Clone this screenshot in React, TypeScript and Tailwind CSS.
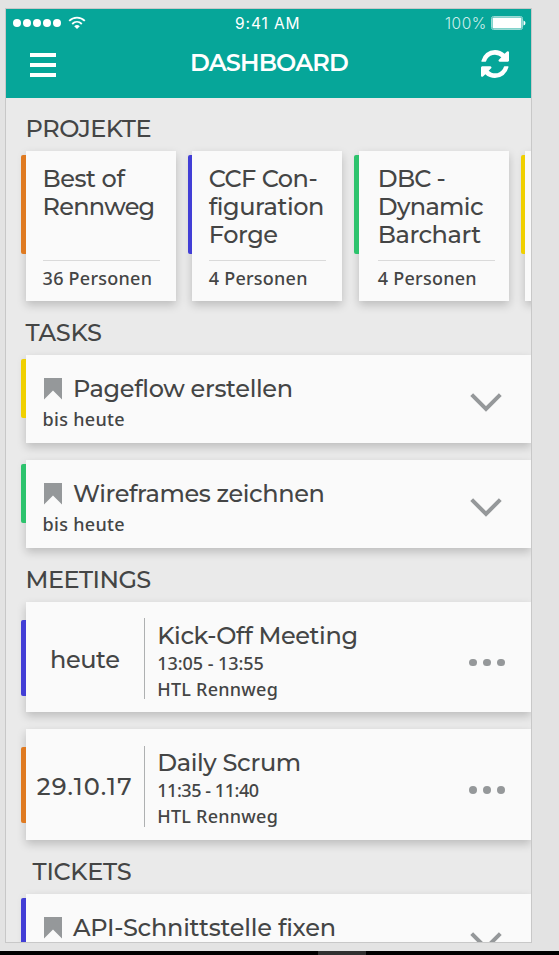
import type { ReactNode } from "react";

const display = "font-['Montserrat','Inter',sans-serif] text-[24px] leading-7 whitespace-nowrap";
const meta = "font-['Noto_Sans',sans-serif] font-medium text-[18px] leading-[26px] whitespace-nowrap";
const cardShadow = "bg-[#fafafa] shadow-[0_4px_9px_rgba(0,0,0,0.2)]";

function Heading({ children, className }: { children: ReactNode; className: string }) {
  return (
    <h2 className={`${display} h-[54px] shrink-0 pt-[18px] font-medium ${className}`}>{children}</h2>
  );
}

function Stripe({ className }: { className: string }) {
  return <div className={`relative z-10 w-[4.5px] shrink-0 rounded-l-[2px] ${className}`} />;
}

function Bookmark() {
  return (
    <svg width="18" height="22" viewBox="0 0 18 22" className="mt-[3px] shrink-0" fill="#95989a">
      <path d="M0 0h18v21.5l-9-9-9 9z" />
    </svg>
  );
}

function Chevron() {
  return (
    <svg width="32" height="20" viewBox="0 0 32 20" fill="none" stroke="#95989a" strokeWidth="4">
      <path d="M1.7 1.7L16 15.9L30.3 1.7" />
    </svg>
  );
}

function Dots() {
  return (
    <div className="flex gap-[6.5px]">
      <i className="size-[7.5px] rounded-full bg-[#95989a]" />
      <i className="size-[7.5px] rounded-full bg-[#95989a]" />
      <i className="size-[7.5px] rounded-full bg-[#95989a]" />
    </div>
  );
}

type Line = { text: string; spacing: string };

function Project({ stripe, lines, people, inset }: {
  stripe: string; lines: Line[]; people: string; inset: string;
}) {
  return (
    <div className="flex w-[154.5px] shrink-0">
      <Stripe className={`mt-1 h-[99.5px] ${stripe}`} />
      <div className={`flex h-[150px] w-[150px] flex-col pt-[14px] ${inset} ${cardShadow}`}>
        <div className="h-[95px]">
          {lines.map((l) => (
            <p key={l.text} className={`${display} font-medium ${l.spacing}`}>{l.text}</p>
          ))}
        </div>
        <div className="h-[1.5px] w-[117px] shrink-0 bg-[#dadada]" />
        <p className={`${meta} mt-[4px] tracking-[0.25px]`}>{people}</p>
      </div>
    </div>
  );
}

function Task({ stripe, title, spacing, due }: { stripe: string; title: string; spacing: string; due?: string }) {
  return (
    <div className="-ml-[4.5px] flex h-[88px] shrink-0">
      <Stripe className={`mt-1 h-[59px] ${stripe}`} />
      <div className={`flex flex-1 justify-between pl-[17px] pr-[29px] pt-5 ${cardShadow}`}>
        <div>
          <div className="flex">
            <span className="flex w-[30.3px] pl-[1px]"><Bookmark /></span>
            <p className={`${display} font-medium ${spacing}`}>{title}</p>
          </div>
          {due && <p className={`${meta} mt-[3px] tracking-[0.3px]`}>{due}</p>}
        </div>
        <div className="mt-[18.5px]"><Chevron /></div>
      </div>
    </div>
  );
}

function Meeting({ stripe, day, daySpacing, title, titleSpacing, time, timeSpacing }: {
  stripe: string; day: string; daySpacing: string; title: string; titleSpacing: string;
  time: string; timeSpacing: string;
}) {
  return (
    <div className="-ml-[4.5px] flex h-[110.5px] shrink-0">
      <Stripe className={`mt-[18px] h-[76px] ${stripe}`} />
      <div className={`flex flex-1 ${cardShadow}`}>
        <p className={`${display} mt-[44px] w-[118.3px] text-center font-medium ${daySpacing}`}>{day}</p>
        <div className="mt-[16.5px] h-[81px] w-[1.3px] bg-[#aeb0b1]" />
        <div className="flex-1 pl-[12px] pt-[20px]">
          <p className={`${display} font-medium ${titleSpacing}`}>{title}</p>
          <p className={`${meta} ${timeSpacing}`}>{time}</p>
          <p className={`${meta} tracking-[0.25px]`}>HTL Rennweg</p>
        </div>
        <div className="mt-[57px] pr-[26.5px]"><Dots /></div>
      </div>
    </div>
  );
}

export default function App() {
  return (
    <div className="flex h-[955px] w-[559px] flex-col overflow-hidden bg-[#e3e3e3] text-[#444545]">
      <div className="ml-[5px] mt-[8px] flex h-[935px] w-[527px] shrink-0 flex-col overflow-hidden border border-[#c8c8c8] bg-[#eaeaea]">
        <header className="h-[88.7px] shrink-0 bg-[#06a699] text-white">
          <div className="flex h-[27px] items-center">
            <div className="ml-[7px] flex w-[48px] justify-between">
              <i className="size-2 rounded-full bg-white" />
              <i className="size-2 rounded-full bg-white" />
              <i className="size-2 rounded-full bg-white" />
              <i className="size-2 rounded-full bg-white" />
              <i className="size-2 rounded-full bg-white" />
            </div>
            <svg width="18" height="14" viewBox="0 0 18 14" fill="none" stroke="white" strokeWidth="1.8" className="ml-[7px]">
              <path d="M1.2 4.9C5.5.4 12.5.4 16.8 4.9" />
              <path d="M4.2 8C7 5.2 11 5.2 13.8 8" />
              <path d="M6.2 10.2q2.8-2.3 5.6 0L9 13z" fill="white" stroke="none" />
            </svg>
            <span className="ml-[149px] w-[120px] pt-[2px] font-['Inter',sans-serif] text-[15.5px] leading-5 tracking-[0.9px]">9:41 AM</span>
            <span className="ml-[90px] w-[46px] pt-[2px] font-['Inter',sans-serif] text-[15.5px] font-light leading-5 tracking-[0.5px] text-[#cdeeeb]">100%</span>
            <svg width="35" height="14" viewBox="0 0 35 14">
              <rect x=".5" y=".5" width="31" height="13" rx="2" fill="none" stroke="#9bdad5" />
              <rect x="1.5" y="1.5" width="29" height="11" rx="1" fill="white" />
              <path d="M32.5 4.5q2 .5 2 2.500t-2 2.500z" fill="white" />
            </svg>
          </div>
          <div className="flex">
            <div className="ml-6 mt-[16.5px] flex h-[24px] w-[26px] flex-col justify-between">
              <i className="h-[4px] bg-white" />
              <i className="h-[4px] bg-white" />
              <i className="h-[4px] bg-white" />
            </div>
            <h1 className={`${display} ml-[134px] mt-[13px] w-[291px] font-semibold tracking-[-0.85px]`}>DASHBOARD</h1>
            <svg width="28" height="28" viewBox="0 0 1536 1536" fill="white" className="mt-[13.5px]">
              <path d="M1511 928q0 5-1 7-64 268-268 434.500T764 1536q-146 0-282.500-55T238 1324l-129 129q-19 19-45 19t-45-19-19-45V960q0-26 19-45t45-19h448q26 0 45 19t19 45-19 45l-137 137q71 66 161 102t187 36q134 0 250-65t186-179q11-17 53-117 8-23 30-23h192q13 0 22.500 9.500t9.500 22.500zm25-800v448q0 26-19 45t-45 19h-448q-26 0-45-19t-19-45 19-45l138-138Q969 256 768 256q-134 0-250 65T332 500q-11 17-53 117-8 23-30 23H50q-13 0-22.500-9.500T18 608v-7q65-268 270-434.500T768 0q146 0 284 55.500T1297 212l130-129q19-19 45-19t45 19 19 45z" />
            </svg>
          </div>
        </header>
        <main className="flex flex-col pl-[19.6px]">
          <h2 className={`${display} h-[53.3px] shrink-0 pt-[17.3px] font-medium tracking-[-0.5px]`}>PROJEKTE</h2>
          <section className="-ml-[4.5px] flex gap-[12.1px]">
            <Project stripe="bg-[#df7a21]" inset="pl-[17px]" people="36 Personen"
              lines={[{ text: "Best of", spacing: "tracking-[-0.45px]" }, { text: "Rennweg", spacing: "tracking-[-0.75px]" }]} />
            <Project stripe="bg-[#423ed6]" inset="pl-[16.5px]" people="4 Personen"
              lines={[{ text: "CCF Con-", spacing: "tracking-[-0.5px]" }, { text: "figuration", spacing: "tracking-[-0.4px]" }, { text: "Forge", spacing: "tracking-[-0.4px]" }]} />
            <Project stripe="bg-[#2dc36d]" inset="pl-[19px]" people="4 Personen"
              lines={[{ text: "DBC -", spacing: "tracking-[-0.7px]" }, { text: "Dynamic", spacing: "tracking-[-0.65px]" }, { text: "Barchart", spacing: "tracking-[-0.45px]" }]} />
            <Project stripe="bg-[#f0d000]" inset="pl-[40px]" people="" lines={[]} />
          </section>
          <Heading className="tracking-[-0.3px]">TASKS</Heading>
          <section className="flex flex-col gap-[17px]">
            <Task stripe="bg-[#f0d000]" title="Pageflow erstellen" spacing="tracking-[-0.33px]" due="bis heute" />
            <Task stripe="bg-[#2dc36d]" title="Wireframes zeichnen" spacing="tracking-[-0.38px]" due="bis heute" />
          </section>
          <Heading className="tracking-[-0.55px]">MEETINGS</Heading>
          <section className="flex flex-col gap-[17px]">
            <Meeting stripe="bg-[#423ed6]" day="heute" daySpacing="tracking-[-0.4px]" title="Kick-Off Meeting" titleSpacing="tracking-[-0.38px]" time="13:05 - 13:55" timeSpacing="tracking-[-0.05px]" />
            <Meeting stripe="bg-[#df7a21]" day="29.10.17" daySpacing="tracking-[1.2px]" title="Daily Scrum" titleSpacing="tracking-[-0.35px]" time="11:35 - 11:40" timeSpacing="tracking-[-0.45px]" />
          </section>
          <Heading className="pl-[7px] tracking-[-0.3px]">TICKETS</Heading>
          <Task stripe="bg-[#423ed6]" title="API-Schnittstelle fixen" spacing="tracking-[-0.22px]" />
        </main>
      </div>
      <footer className="mt-[8px] flex h-1 shrink-0 bg-black">
        <div className="ml-[318px] w-[48px] bg-[#303030]" />
      </footer>
    </div>
  );
}
